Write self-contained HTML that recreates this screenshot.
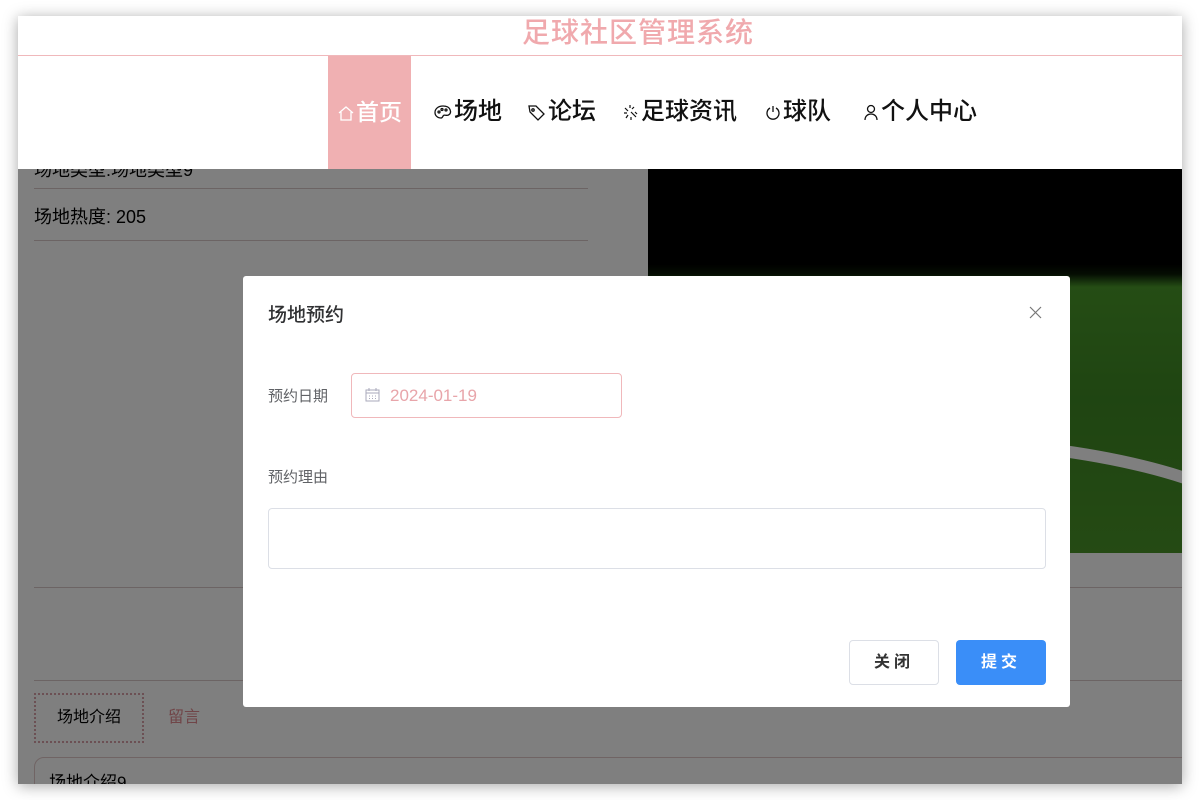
<!DOCTYPE html>
<html><head><meta charset="utf-8"><style>
*{box-sizing:border-box;margin:0;padding:0}
body{width:1200px;height:800px;background:#fff;position:relative;overflow:hidden;font-family:"Liberation Sans","Noto Sans CJK SC",sans-serif}
.frame{position:absolute;left:18px;top:16px;width:1164px;height:768px;background:#fff;overflow:hidden;box-shadow:0 2px 14px rgba(0,0,0,.35)}
.a{position:absolute}
.hdr{left:0;top:0;width:1164px;height:40px;background:#fff;border-bottom:1px solid #f0b8bb;z-index:5}
.hdr span{position:absolute;left:504px;top:0;color:#f0a9ad;font-size:28px;line-height:34px;font-weight:500;letter-spacing:1px}
.nav{left:0;top:40px;width:1164px;height:113px;background:#fff;z-index:5}
.ni{position:absolute;top:0;height:113px;line-height:112px;font-size:24px;color:#111;white-space:nowrap;font-weight:500}
.ni svg{vertical-align:-2px;margin-right:1px}
.act{background:#f0b0b2;color:#fff;left:310px;width:83px;text-align:center}
.line{height:1px;background:#d8c8c8}
.ov{left:0;top:153px;width:1164px;height:615px;background:rgba(0,0,0,.5);z-index:3}
.modal{left:225px;top:260px;width:827px;height:431px;background:#fff;border-radius:3px;z-index:6}
</style></head><body>
<div class="frame">
<div class="a hdr"><span>足球社区管理系统</span></div>
<div class="a nav">
 <div class="ni act" style="font-size:23px"><svg width="18" height="18" viewBox="0 0 18 18" fill="none" stroke="#fff" stroke-width="1.3"><path d="M2 9L9 3l7 6M4 8v8h10V8"/></svg>首页</div>
 <div class="ni" style="left:415px"><svg width="20" height="18" viewBox="0 0 20 18" fill="none" stroke="#111" stroke-width="1.3"><path d="M10 3C5 3 2 6 2 9.5S5 15 8 15c1.5 0 1.5-1.5 2.5-2.5s3 .5 5-.5S18 9 17 6.5 13 3 10 3z"/><circle cx="6" cy="9" r="1"/><circle cx="9" cy="6.5" r="1"/><circle cx="13" cy="7" r="1"/></svg>场地</div>
 <div class="ni" style="left:509px"><svg width="20" height="18" viewBox="0 0 20 18" fill="none" stroke="#111" stroke-width="1.3"><path d="M2 3h7l8 8-6 6-8-8z"/><circle cx="6" cy="7" r="1.2"/></svg>论坛</div>
 <div class="ni" style="left:604px"><svg width="18" height="18" viewBox="0 0 18 18" fill="none" stroke="#111" stroke-width="1.2"><path d="M3 5l3 3M8 2v3M12 4l-2 2M2 10h3M9 9l5 5M13 9l2 2M6 12l-2 3M9 14v3"/></svg>足球资讯</div>
 <div class="ni" style="left:746px"><svg width="18" height="18" viewBox="0 0 18 18" fill="none" stroke="#111" stroke-width="1.3"><path d="M6 5a6 6 0 1 0 6 0M9 3v6"/></svg>球队</div>
 <div class="ni" style="left:844px"><svg width="18" height="18" viewBox="0 0 18 18" fill="none" stroke="#111" stroke-width="1.3"><circle cx="9" cy="6" r="3.5"/><path d="M3 17c0-4 3-6 6-6s6 2 6 6"/></svg>个人中心</div>
</div>
<div class="a" style="left:16px;top:140px;font-size:18px;color:#000">场地类型:场地类型9</div>
<div class="a line" style="left:16px;top:172px;width:554px"></div>
<div class="a" style="left:16px;top:187px;font-size:18px;color:#000">场地热度: 205</div>
<div class="a line" style="left:16px;top:224px;width:554px"></div>
<div class="a line" style="left:16px;top:571px;width:1148px"></div>
<div class="a line" style="left:16px;top:664px;width:1148px"></div>
<div class="a" style="left:16px;top:677px;width:110px;height:50px;border:2px dotted #d8a0a8;font-size:16px;line-height:46px;text-align:center;color:#000">场地介绍</div>
<div class="a" style="left:150px;top:677px;font-size:16px;line-height:50px;color:#e08a90">留言</div>
<div class="a" style="left:16px;top:741px;width:1160px;height:60px;border:1px solid #e0c8c8;border-radius:10px;padding:10px 14px;font-size:17px">场地介绍9</div>
<div class="a" style="left:630px;top:153px;width:534px;height:384px;background:linear-gradient(#000 0,#000 95px,#0a1a05 105px,#4a9a2a 118px,#3f8a24 60%,#4a9528 100%)"></div>
<svg class="a" style="left:630px;top:153px" width="534" height="384"><path d="M400 280 Q480 290 540 310" stroke="#fff" stroke-width="12" fill="none"/></svg>
<div class="a ov"></div>
<div class="a modal">
 <div class="a" style="left:25px;top:24px;font-size:19px;color:#303133;font-weight:500">场地预约</div>
 <svg class="a" style="left:786px;top:30px" width="13" height="13" viewBox="0 0 13 13" stroke="#777" stroke-width="1.2"><path d="M1 1l11 11M12 1L1 12"/></svg>
 <div class="a" style="left:25px;top:109px;font-size:15px;color:#606266">预约日期</div>
 <div class="a" style="left:108px;top:97px;width:271px;height:45px;border:1px solid #f0b8bb;border-radius:4px"></div>
 <svg class="a" style="left:122px;top:112px" width="15" height="14" viewBox="0 0 15 14" fill="none" stroke="#aab" stroke-width="1"><rect x="1" y="2" width="13" height="11"/><path d="M1 5h13M4 0v3M11 0v3M4 8h1M7 8h1M10 8h1M4 10.5h1M7 10.5h1M10 10.5h1"/></svg>
 <div class="a" style="left:147px;top:110px;font-size:17px;color:#e8a5aa">2024-01-19</div>
 <div class="a" style="left:25px;top:190px;font-size:15px;color:#606266">预约理由</div>
 <div class="a" style="left:25px;top:232px;width:778px;height:61px;border:1px solid #dcdfe6;border-radius:4px"></div>
 <div class="a" style="left:606px;top:364px;width:90px;height:45px;border:1px solid #dcdfe6;border-radius:4px;font-size:16px;line-height:43px;text-align:center;color:#333;letter-spacing:4px;font-weight:bold">关闭</div>
 <div class="a" style="left:713px;top:364px;width:90px;height:45px;background:#3a8ef8;border-radius:4px;font-size:16px;line-height:45px;text-align:center;color:#fff;letter-spacing:4px;font-weight:bold">提交</div>
</div>
</div>
</body></html>
